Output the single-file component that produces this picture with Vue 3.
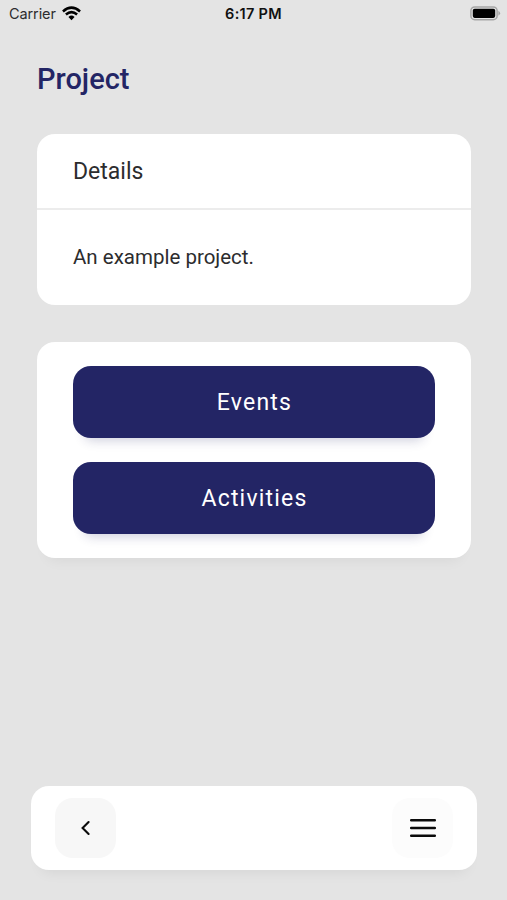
<script setup>
const actions = ['Events', 'Activities']
</script>

<template>
  <div class="screen">
    <header class="status">
      <div class="carrier">
        <span>Carrier</span>
        <svg class="wifi" viewBox="0 0 18 14" width="19" height="15">
          <path d="M0.9 5.1 Q9 -2.1 17.1 5.1" />
          <path d="M3.7 8 Q9 3.3 14.3 8" />
          <path class="dot" d="M6.1 10.2 Q9 7.7 11.9 10.2 L9 13.3 Z" />
        </svg>
      </div>
      <span class="time">6:17 PM</span>
      <div class="power">
        <svg viewBox="0 0 31 15" width="31" height="15">
          <rect class="shell" x="0.9" y="0.9" width="26.2" height="12.8" rx="3.8" />
          <rect x="2.8" y="2.7" width="22.4" height="9.2" rx="1.8" />
          <path class="cap" d="M28.4 4.8 Q31.8 7.3 28.4 9.8 Z" />
        </svg>
      </div>
    </header>

    <main class="content">
      <h1>Project</h1>
      <section class="card details">
        <h2>Details</h2>
        <p>An example project.</p>
      </section>
      <section class="card actions">
        <button v-for="label in actions" :key="label" type="button">{{ label }}</button>
      </section>
    </main>

    <nav class="bar">
      <button class="back" type="button" aria-label="Back">
        <svg viewBox="0 0 12 16" width="12" height="16">
          <path d="M8.6 2 L2.6 8 L8.6 14" />
        </svg>
      </button>
      <button class="menu" type="button" aria-label="Menu">
        <svg viewBox="0 0 28 22" width="28" height="22">
          <path d="M2.2 3.2 H25.8 M2.2 11 H25.8 M2.2 18.8 H25.8" />
        </svg>
      </button>
    </nav>
  </div>
</template>

<style>
body {
  margin: 0;
  background: #e4e4e4;
}
</style>

<style scoped>
.screen {
  box-sizing: border-box;
  height: 900px;
  display: flex;
  flex-direction: column;
  background: #e4e4e4;
  font-family: Roboto, sans-serif;
  color: #2c2c2e;
}
button {
  border: 0;
  padding: 0;
  font-family: inherit;
}
svg {
  display: block;
}
.status {
  height: 27px;
  padding: 0 6px 0 9px;
  display: grid;
  grid-template-columns: 1fr auto 1fr;
  align-items: center;
  font-family: Inter, sans-serif;
  font-size: 14.5px;
  line-height: 27px;
}
.carrier {
  display: flex;
  align-items: center;
  gap: 6px;
  letter-spacing: -0.1px;
}
.wifi path {
  fill: none;
  stroke: #000;
  stroke-width: 2.4;
}
.wifi .dot {
  fill: #000;
  stroke: none;
}
.time {
  margin-right: 3px;
  font-weight: 600;
  letter-spacing: 0.3px;
  color: #111;
}
.power {
  display: flex;
  justify-content: flex-end;
}
.shell {
  fill: none;
  stroke: #a5a5a5;
  stroke-width: 1.5;
}
.cap {
  fill: #a5a5a5;
}
.content {
  flex: 1;
  padding: 32px 36px 0 37px;
}
h1 {
  margin: 0 0 34.5px;
  font-size: 29px;
  line-height: 40px;
  font-weight: 500;
  color: #232565;
}
.card {
  background: #fff;
  border-radius: 18px;
}
.details {
  height: 171.5px;
  margin-bottom: 37px;
}
h2 {
  box-sizing: border-box;
  height: 76px;
  margin: 0;
  padding: 0 36px;
  border-bottom: 2px solid #ececec;
  font-size: 23px;
  font-weight: 400;
  line-height: 75px;
}
p {
  margin: 0;
  padding: 0 36px;
  font-size: 20.5px;
  line-height: 95px;
}
.actions {
  box-sizing: border-box;
  height: 216px;
  padding: 24px 36px;
  display: flex;
  flex-direction: column;
  gap: 24px;
  box-shadow: 0 12px 14px -10px rgba(0, 0, 0, 0.06);
}
.actions button {
  height: 72px;
  padding: 1px 0 0 1px;
  border-radius: 18px;
  background: #232565;
  color: #fff;
  font-size: 23px;
  letter-spacing: 1.2px;
  box-shadow: 0 14px 12px -12px rgba(35, 37, 101, 0.24);
}
.bar {
  box-sizing: border-box;
  height: 84px;
  margin: 0 30px 30px 31px;
  padding: 0 24px;
  display: flex;
  justify-content: space-between;
  align-items: center;
  border-radius: 18px;
  background: #fff;
  box-shadow: 0 12px 14px -10px rgba(0, 0, 0, 0.07);
}
.bar button {
  width: 61px;
  height: 60px;
  display: flex;
  align-items: center;
  justify-content: center;
  border-radius: 18px;
}
.back {
  background: #f7f7f7;
}
.bar .menu {
  background: #fcfcfc;
}
.bar path {
  fill: none;
  stroke: #0b0b0b;
  stroke-width: 2.1;
  stroke-linecap: round;
}
.bar .menu path {
  stroke-width: 2.5;
}
</style>
